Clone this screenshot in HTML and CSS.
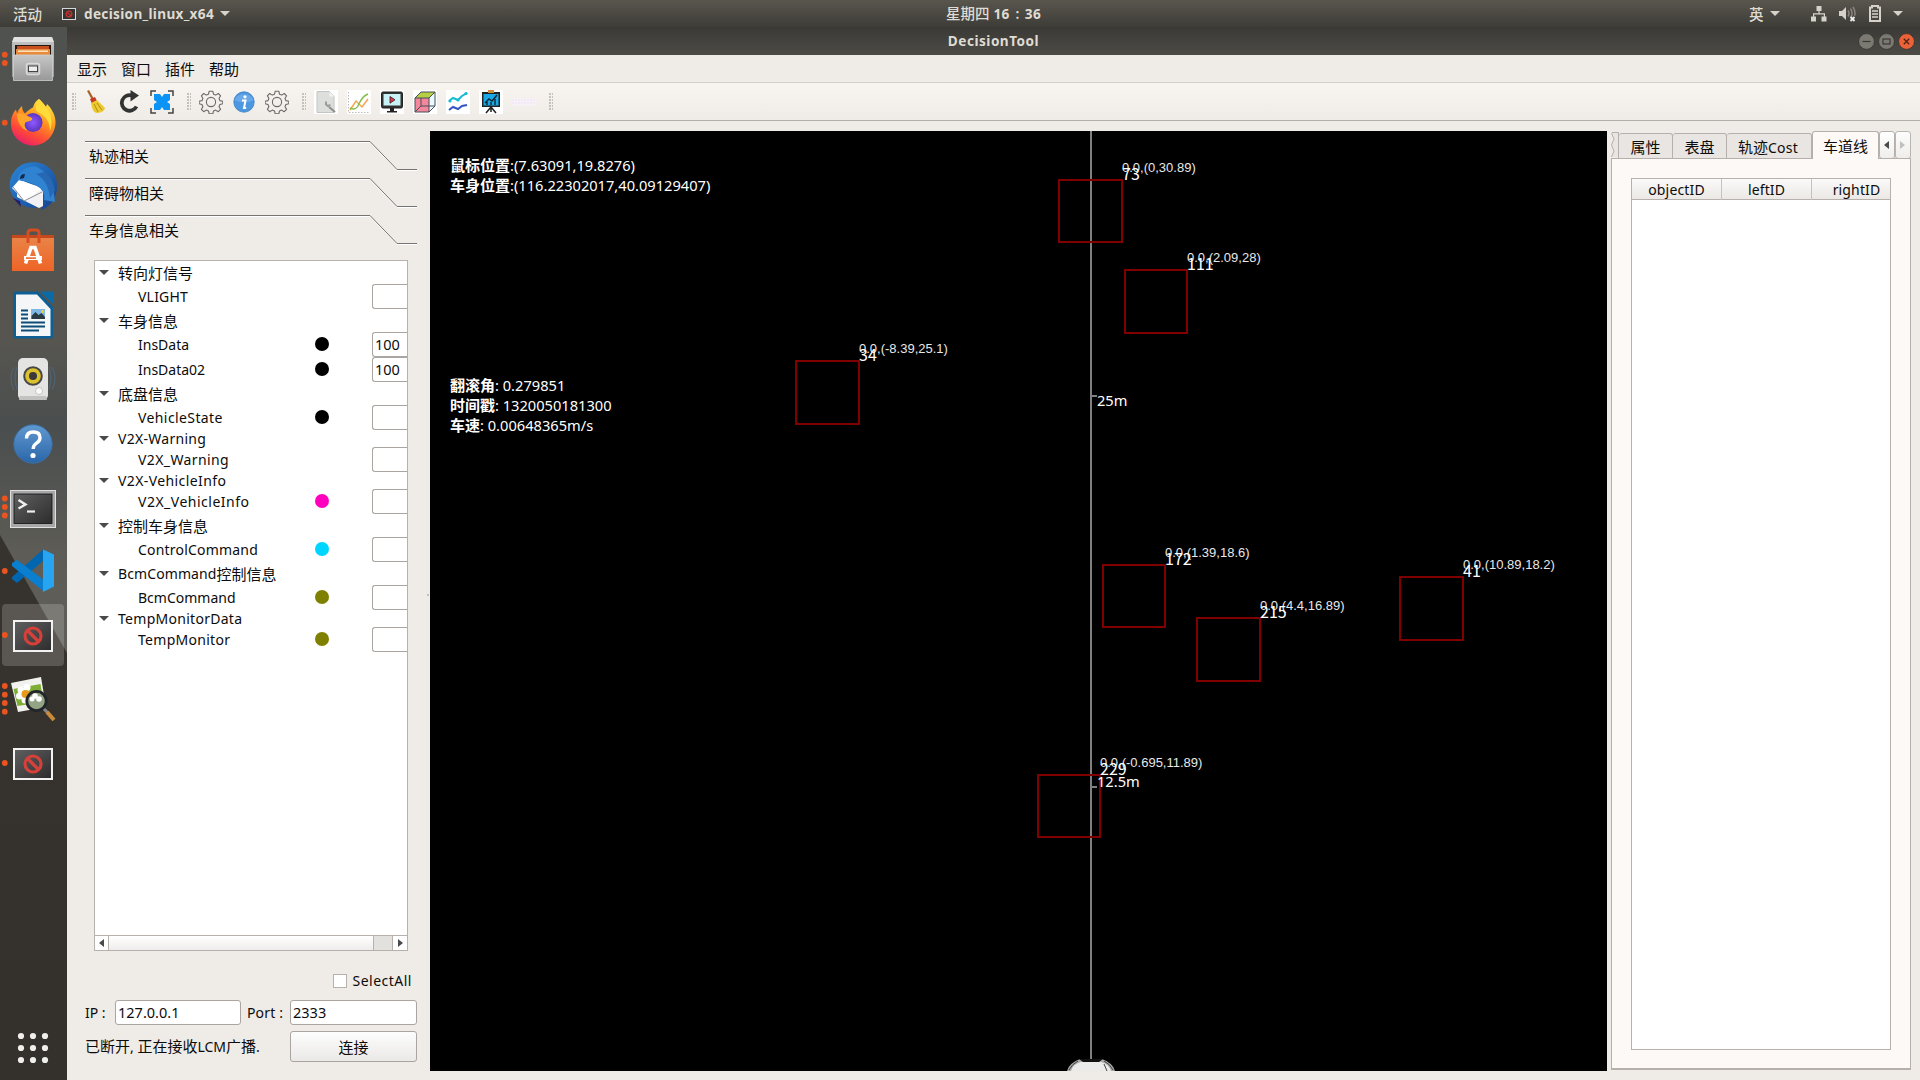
FILE: index.html
```html
<!DOCTYPE html>
<html lang="zh-CN">
<head>
<meta charset="utf-8">
<title>DecisionTool</title>
<link rel="stylesheet" href="styles.css">
</head>
<body>
<svg class="defs" width="0" height="0">
  <defs>
    <linearGradient id="gSilver" x1="0" y1="0" x2="0" y2="1"><stop offset="0" stop-color="#c6c6c6"/><stop offset="1" stop-color="#999"/></linearGradient>
    <linearGradient id="gFox" x1=".8" y1="0" x2=".3" y2="1"><stop offset="0" stop-color="#fff14a"/><stop offset=".4" stop-color="#ff9a1f"/><stop offset=".75" stop-color="#ff4838"/><stop offset="1" stop-color="#e81e6c"/></linearGradient>
    <radialGradient id="gGlobe"><stop offset="0" stop-color="#9059ff"/><stop offset="1" stop-color="#5b35c0"/></radialGradient>
    <linearGradient id="gBird" x1="0" y1="0" x2="1" y2="1"><stop offset="0" stop-color="#2b87d8"/><stop offset="1" stop-color="#14418e"/></linearGradient>
    <linearGradient id="gBag" x1="0" y1="0" x2="0" y2="1"><stop offset="0" stop-color="#e98347"/><stop offset="1" stop-color="#ef6427"/></linearGradient>
    <linearGradient id="gHelp" x1="0" y1="0" x2="0" y2="1"><stop offset="0" stop-color="#6198d0"/><stop offset="1" stop-color="#2a66a8"/></linearGradient>
    <linearGradient id="gDark" x1="0" y1="0" x2="1" y2="1"><stop offset="0" stop-color="#606060"/><stop offset="1" stop-color="#2c2c2c"/></linearGradient>
    <symbol id="noentry" viewBox="0 0 40 32">
      <rect x="1" y="1" width="38" height="30" fill="url(#gDark)" stroke="#f2f2f2" stroke-width="2"/>
      <circle cx="20" cy="16" r="8" fill="none" stroke="#d5403a" stroke-width="3.200"/>
      <path d="M14.500 10.500L25.500 21.500" stroke="#d5403a" stroke-width="3.400"/>
    </symbol>
    <symbol id="gear" viewBox="0 0 24 24">
      <path d="M10.200 1.200h3.600l.7 3 2.200.9 2.600-1.600 2.300 2.300-1.600 2.700.9 2.100 2.900.7v2.400l-2.900.8-.9 2.200 1.600 2.600-2.400 2.400-2.600-1.600-2.100.9-.7 2.900h-3.600l-.7-2.900-2.200-.9-2.600 1.600-2.300-2.400 1.500-2.600-.9-2.200-2.900-.8v-2.400l2.900-.7.9-2.100-1.500-2.700 2.300-2.300 2.600 1.600 2.200-.9z" fill="none" stroke="#6a6a6a" stroke-width="1.100" stroke-linejoin="round"/>
      <circle cx="12" cy="12" r="4.600" fill="none" stroke="#6a6a6a" stroke-width="1.100"/>
    </symbol>
  </defs>
</svg>

<header class="topbar">
  <div class="top-left">
    <span class="cn activities">活动</span>
    <svg class="app-ico" width="14" height="12" viewBox="0 0 14 12"><rect x=".5" y=".5" width="13" height="11" fill="#333" stroke="#d8d8d8"/><circle cx="7" cy="6" r="2.800" fill="none" stroke="#c8302c" stroke-width="1.300"/><path d="M5 4l4 4" stroke="#c8302c" stroke-width="1.200"/></svg>
    <span class="app-name">decision_linux_x64</span>
    <i class="caret"></i>
  </div>
  <div class="clock"><span class="cn">星期四</span> 16<span class="cn colon">:</span>36</div>
  <div class="top-right">
    <span class="cn ime">英</span><i class="caret"></i>
    <svg class="net" width="16" height="16" viewBox="0 0 16 16" fill="#d6d2c9"><path d="M5.500 0h5v5h-5zM0 10.500h5v5H0zM10.500 10.500h5v5h-5zM7.400 5h1.200v3H7.400zM2 7.300h12v1.200H2zM2 7.300h1.200v3.500H2zM12.800 7.300H14v3.500h-1.200z"/></svg>
    <svg class="vol" width="17" height="16" viewBox="0 0 17 16"><path d="M0 5h3l4-4v13l-4-4H0z" fill="#d6d2c9"/><path d="M9 4.500q2 3 0 6M11.500 2.500q3 5 0 9.500M14 .8q3 5 1.500 9" stroke="#88857e" stroke-width="1.500" fill="none"/><path d="M11.500 11l4 4m0-4l-4 4" stroke="#eee" stroke-width="1.800"/></svg>
    <svg class="bat" width="12" height="17" viewBox="0 0 12 17"><path d="M3 2.500V1h6v1.500h2V16H1V2.500z" fill="none" stroke="#d6d2c9" stroke-width="2"/><path d="M3 6h6M3 9h6M3 12h6" stroke="#d6d2c9" stroke-width="1.600"/></svg>
    <i class="caret"></i>
  </div>
</header>

<div class="desktop">
  <nav class="dock">
    <svg class="slot" viewBox="0 0 67 64"><g fill="#e95420"><circle cx="4.800" cy="27.700" r="2.900"/><circle cx="4.800" cy="36" r="2.900"/></g><path d="M14 10h38l2 6v34H12V16z" fill="url(#gSilver)"/><path d="M14 10h38l2 5H12z" fill="#e1e1e1"/><rect x="15" y="18" width="36" height="11" fill="#241a14"/><rect x="17" y="19" width="32" height="4" fill="#c8501e"/><rect x="16" y="22" width="34" height="7" fill="#e88a3c"/><rect x="18" y="23.500" width="30" height="1.400" fill="#ffe9c8"/><path d="M13.500 28h39v25.500h-39z" fill="url(#gSilver)" stroke="#cfcfcf" stroke-width=".8"/><rect x="26.500" y="36.500" width="13" height="11" rx="2" fill="#b5b5b5" stroke="#dadada" stroke-width="1.500"/><rect x="28.500" y="39" width="9" height="5.500" fill="#eee" stroke="#444"/></svg>
    <svg class="slot" viewBox="0 0 67 64"><circle cx="4.800" cy="31.700" r="2.900" fill="#e95420"/><path d="M39 8c3 3 5 5 7 8l1-3c5 5 9 12 8.500 19.500C54.500 45 45 54.500 33 54.500S11 45 11 32.500c0-6 2-11 5-14l1 4c1-3 3-6 5-7.500 0 3 1 6 3 7.500 5-5 8-6 8-6 1-4 3-7 6-8.500z" fill="url(#gFox)"/><circle cx="33" cy="31.500" r="9.500" fill="url(#gGlobe)"/><path d="M17 23c5-2 8 1 15 4 1 3-3 3-6 4-2 2-2 5 2 9-7-2-11-9-11-17z" fill="#ffa52a"/><path d="M39 8c3 3 5 5 7 8 6 7 7 16 4 24 0-10-5-15-12-19-4-2-2-9 1-13z" fill="#ffdc3a"/></svg>
    <svg class="slot" viewBox="0 0 67 64"><path d="M57 31c0 13-7 21-16 24l2-5-8 3c-8 0-15-3-20-9-6-7-7-16-3-24 4-7 9-11 15-12 12-3 30 3 30 23z" fill="url(#gBird)"/><path d="M17 34l6-8 20 9 0 16-4 2-22-11z" fill="#f2f2f4"/><path d="M12 33l7-8 24 8-18 13z" fill="#fff"/><path d="M13 32l11 14 18-9" fill="none" stroke="#8d8d96" stroke-width="1"/><path d="M17 25c2-10 11-15 20-13 8 4 14 11 16 19l2 16-11-2c2-8-4-13-11-16-5-2-10-4-16-4z" fill="#2f83d0"/><path d="M36 19q12 6 14 24l5-8q-2-13-11-18z" fill="#2668b4"/><path d="M20 24l4-1 1-4q-5 0-5 5z" fill="#142a50"/><path d="M13 43l8 9-1-6z" fill="#271c6b"/></svg>
    <svg class="slot" viewBox="0 0 67 64"><path d="M12 16h42v4H12z" fill="#c4481b"/><path d="M12 19h42v33H12z" fill="url(#gBag)"/><path d="M28 24V14q0-3 3-3h5q3 0 3 3v10" fill="none" stroke="#d44e1f" stroke-width="3"/><path d="M25.500 44.500L31 28.500h4l5.500 16" fill="none" stroke="#fff" stroke-width="3.600"/><path d="M24 37h18v4H24z" fill="#fff"/><path d="M26 38.300h10v1.600H26z" fill="#e8692c"/></svg>
    <svg class="slot" viewBox="0 0 67 64"><path d="M16 8.500h22L53 24v29q0 2.500-2.500 2.500h-35Q13 55.500 13 53V11q0-2.500 3-2.500z" fill="#0d5f94"/><path d="M40 8.500h13V21z" fill="#0c6aa6"/><path d="M16 11.500h21L50.500 26v27H16z" fill="#f4f6f8"/><path d="M21 27.500h7M21 31.500h7M21 35.500h7M21 39.500h24M21 43.500h24M21 47.500h18" stroke="#0b4c78" stroke-width="2"/><rect x="31" y="26" width="14" height="10" fill="#7fb8e4"/><path d="M31.500 36v-3l4-4 3 3 3-2 3.500 4v2z" fill="#2b3b44"/><circle cx="42.500" cy="28.500" r="1.500" fill="#f0d040"/></svg>
    <svg class="slot" viewBox="0 0 67 64"><path d="M14 20q-6 11 0 23M17 20q-4 11 0 22M52 20q6 11 0 23M49 20q4 11 0 22" stroke="#50687f" stroke-width="1.300" fill="none" opacity=".7"/><rect x="18" y="11" width="30" height="42" rx="5" fill="#e4e4e2"/><path d="M20 49h26l1 4H19z" fill="#c2c2c0"/><circle cx="33" cy="29" r="9.800" fill="#474747"/><circle cx="33" cy="29" r="7.800" fill="#d9c22c"/><circle cx="33" cy="29" r="4" fill="#3a3a3a"/><circle cx="39" cy="44" r="3.500" fill="#fafafa" stroke="#aaa" stroke-width=".6"/></svg>
    <svg class="slot" viewBox="0 0 67 64"><circle cx="33" cy="33" r="19.200" fill="url(#gHelp)" stroke="#3a70a8" stroke-width="1"/><path d="M26.500 27.500q0-6.500 6.800-6.500 6.700 0 6.700 5.700 0 3.300-3.800 5.700-3 2-3 5.600" fill="none" stroke="#fff" stroke-width="3.400"/><circle cx="33" cy="44.500" r="2.600" fill="#fff"/></svg>
    <svg class="slot" viewBox="0 0 67 64"><g fill="#e95420"><circle cx="4.800" cy="23.500" r="2.900"/><circle cx="4.800" cy="32" r="2.900"/><circle cx="4.800" cy="40.500" r="2.900"/></g><rect x="10.500" y="15.500" width="45" height="37" fill="#a7a7a7" stroke="#e0e0e0"/><rect x="14" y="19" width="38" height="29.500" fill="url(#gDark)" stroke="#111" stroke-width=".8"/><path d="M18.500 25l7 4.500-7 4" fill="none" stroke="#eee" stroke-width="2.400"/><path d="M27 36.500h8" stroke="#eee" stroke-width="2.200"/></svg>
    <svg class="slot" viewBox="0 0 67 64"><circle cx="4.800" cy="32" r="2.900" fill="#e95420"/><path d="M43 10.500V22L17 44l-5-4v-2z" fill="#0066b0"/><path d="M12 24l5-3 27 20v11.500L12 27z" fill="#0a7fd0"/><path d="M43 10.500L54 15.500v32L43 53z" fill="#27a5f0"/></svg>
    <svg class="slot" viewBox="0 0 67 64"><rect x="2" y="1" width="62" height="62" rx="4" fill="#fff" fill-opacity=".18"/><circle cx="4.800" cy="32" r="2.900" fill="#e95420"/><use href="#noentry" x="13" y="17" width="40" height="32"/></svg>
    <svg class="slot" viewBox="0 0 67 64"><g fill="#e95420"><circle cx="4.800" cy="19" r="2.900"/><circle cx="4.800" cy="27.700" r="2.900"/><circle cx="4.800" cy="36" r="2.900"/><circle cx="4.800" cy="44.700" r="2.900"/></g><path d="M11 16l30-6 5 30-28 5z" fill="#f1f1ee"/><path d="M13.500 22l27-5 3 18-26 4z" fill="#7fae35"/><g fill="#fff"><circle cx="21" cy="23" r="3.500"/><circle cx="27" cy="20.500" r="3.500"/><circle cx="19.500" cy="29" r="3.500"/><circle cx="25" cy="33" r="3.500"/></g><circle cx="25.500" cy="27" r="4" fill="#e79a1c"/><circle cx="36.500" cy="34" r="9.700" fill="#93a585" stroke="#22262a" stroke-width="2.800"/><g fill="#fff"><circle cx="35" cy="29" r="2.800"/><circle cx="39" cy="32" r="2.800"/><circle cx="32" cy="32" r="2.500"/></g><path d="M44 42l4 4" stroke="#888" stroke-width="3"/><path d="M47 45l7 8" stroke="#c98a3a" stroke-width="4"/></svg>
    <svg class="slot" viewBox="0 0 67 64"><circle cx="4.800" cy="32" r="2.900" fill="#e95420"/><use href="#noentry" x="13" y="17" width="40" height="32"/></svg>
    <svg class="slot apps" viewBox="0 0 67 64"><g fill="#f0efec"><circle cx="21" cy="20" r="3.100"/><circle cx="33" cy="20" r="3.100"/><circle cx="45" cy="20" r="3.100"/><circle cx="21" cy="32" r="3.100"/><circle cx="33" cy="32" r="3.100"/><circle cx="45" cy="32" r="3.100"/><circle cx="21" cy="44" r="3.100"/><circle cx="33" cy="44" r="3.100"/><circle cx="45" cy="44" r="3.100"/></g></svg>
  </nav>

  <main class="window">
    <div class="titlebar">
      <span class="title">DecisionTool</span>
      <div class="wm">
        <svg width="17" height="17" viewBox="0 0 17 17"><circle cx="8.500" cy="8.500" r="7.900" fill="#7b7972" stroke="#34332f" stroke-width=".8"/><path d="M4.500 8.500h8" stroke="#3a3935" stroke-width="1.200"/></svg>
        <svg width="17" height="17" viewBox="0 0 17 17"><circle cx="8.500" cy="8.500" r="7.900" fill="#7b7972" stroke="#34332f" stroke-width=".8"/><rect x="5" y="6" width="7" height="5" fill="none" stroke="#3a3935" stroke-width="1.200"/></svg>
        <svg width="17" height="17" viewBox="0 0 17 17"><circle cx="8.500" cy="8.500" r="7.900" fill="#ec6238" stroke="#34332f" stroke-width=".8"/><path d="M5.800 5.800l5.400 5.400m0-5.400l-5.400 5.400" stroke="#4a2418" stroke-width="1.300"/></svg>
      </div>
    </div>

    <div class="menubar cn"><span>显示</span><span>窗口</span><span>插件</span><span>帮助</span></div>

    <div class="toolbar">
      <i class="grip"></i>
      <div class="tools">
        <svg viewBox="0 0 24 24"><path d="M3 1l2-1 5 9-2 1z" fill="#a5642a"/><path d="M6 9l5-2 2 4-5 3z" fill="#c23a22"/><path d="M7 13l6-3 8 8q-1 5-9 5-4-2-5-10z" fill="#ecc931"/><path d="M10 14l4 8M13 13l5 7" stroke="#b28d12" stroke-width="1"/></svg>
        <svg viewBox="0 0 24 24"><path d="M19.500 16.500A7.800 7.800 0 1 1 15 5.500" fill="none" stroke="#333" stroke-width="3.800"/><path d="M13.500 0l8.500 5.500-8.500 6z" fill="#333"/></svg>
        <svg viewBox="0 0 24 24"><path d="M1 6V1h5M18 1h5v5M23 18v5h-5M6 23H1v-5" fill="none" stroke="#444" stroke-width="1.500"/><path d="M4 4h6l2 3 2-3h6v6l-3 2 3 2v6h-6l-2-3-2 3H4v-6l3-2-3-2z" fill="#0b93f5"/></svg>
      </div>
      <i class="grip"></i>
      <div class="tools">
        <svg viewBox="0 0 24 24"><use href="#gear"/></svg>
        <svg viewBox="0 0 24 24"><circle cx="12" cy="12" r="10.200" fill="#4c97e0" stroke="#3a7fc6" stroke-width=".8"/><path d="M2.500 10a10 8.500 0 0 1 19 0q-9 5-19 0z" fill="#7db6ee" opacity=".6"/><circle cx="13" cy="6.800" r="1.600" fill="#fff"/><path d="M10 10.500h3.500L12 18h2.200" fill="none" stroke="#fff" stroke-width="2"/></svg>
        <svg viewBox="0 0 24 24"><use href="#gear"/></svg>
      </div>
      <i class="grip"></i>
      <div class="tools boxed">
        <svg viewBox="0 0 24 24"><path d="M3 1.500h12.500l4.500 5v16H3z" fill="#dddfdc" stroke="#c2c5c1"/><path d="M15.500 1.500v5H20z" fill="#f3f3f3"/><path d="M15 17l6 5" stroke="#8d908c" stroke-width="2.200"/><path d="M12 11.500v3l2 1.500 2.500-1" fill="none" stroke="#9a9d99" stroke-width="2"/></svg>
        <svg viewBox="0 0 24 24"><path d="M1.500 2v20.500H23" fill="none" stroke="#bbb" stroke-width="1" stroke-dasharray="1.500 1.500"/><path d="M3 20l6-9 6 6 6-8" fill="none" stroke="#f3a24c" stroke-width="1.400"/><path d="M3 18c4 2 7 1 9-4s4-8 9-10" fill="none" stroke="#84be4c" stroke-width="1.400"/></svg>
        <svg viewBox="0 0 24 24"><rect x="1.500" y="2" width="21" height="16" rx="1.500" fill="#333" stroke="#222"/><rect x="3.500" y="4" width="17" height="11.500" fill="#c9f2f6"/><path d="M10 6.500l5 3.300-5 3.400z" fill="#e8334a" stroke="#222" stroke-width=".8"/><path d="M10 18h4v3h-4zM7 21h10v1.500H7z" fill="#222"/></svg>
        <svg viewBox="0 0 24 24"><path d="M2 8l6-6h14v14l-6 6H2z" fill="#e9fbff"/><path d="M2 8l6-6h14l-6 6z" fill="#b6cf45"/><path d="M2 8h14v14H2z" fill="#f5879d"/><path d="M2 8l6-6h14v14l-6 6H2zM2 8h14v14M16 8l6-6M8 8v8L2 22M8 16h14" fill="none" stroke="#454f55" stroke-width="1"/></svg>
        <svg viewBox="0 0 24 24"><path d="M3 11l4-3 5 2 4-4 5-3" fill="none" stroke="#15bcd6" stroke-width="2"/><path d="M3 20l4-3 5 2 4-3 5-1" fill="none" stroke="#3555c4" stroke-width="2"/><g fill="#15bcd6"><circle cx="4" cy="11" r="1.600"/><circle cx="12" cy="10" r="1.600"/><circle cx="20" cy="3.500" r="1.600"/></g></svg>
        <svg viewBox="0 0 24 24"><path d="M12 17l-5 6M12 17l5 6M12 15v7" stroke="#222" stroke-width="1.500"/><path d="M3 2h18v15H3z" fill="#222"/><path d="M4.500 4h15v11.500h-15z" fill="#19a9e6"/><rect x="9" y="0" width="6" height="3" fill="#c98b3c"/><path d="M6 13l4-4 3 2 5-6M8 15v-3M12 15v-3M16 15V9" fill="none" stroke="#123" stroke-width="1.400"/></svg>
        <svg class="strip" viewBox="0 0 24 24"><path d="M0 8.500h24v7H0z" fill="#f8f2f8"/><path d="M0 10h24M0 13h24" stroke="#ebe1f2" stroke-dasharray="2 1"/></svg>
      </div>
      <i class="grip"></i>
    </div>

    <div class="content">
      <aside class="left">
        <div class="fold cn"><svg viewBox="0 0 332 29"><path d="M0 1.500H285L312 29.500H332" fill="none" stroke="#fff"/><path d="M0 .5H285L312 28.500H332" fill="none" stroke="#77746f"/></svg><span>轨迹相关</span></div>
        <div class="fold cn"><svg viewBox="0 0 332 29"><path d="M0 1.500H285L312 29.500H332" fill="none" stroke="#fff"/><path d="M0 .5H285L312 28.500H332" fill="none" stroke="#77746f"/></svg><span>障碍物相关</span></div>
        <div class="fold cn"><svg viewBox="0 0 332 29"><path d="M0 1.500H285L312 29.500H332" fill="none" stroke="#fff"/><path d="M0 .5H285L312 28.500H332" fill="none" stroke="#77746f"/></svg><span>车身信息相关</span></div>

        <div class="tree">
          <div class="rows">
            <div class="group cn">转向灯信号</div>
            <div class="item ls2"><span>VLIGHT</span><b class="val"></b></div>
            <div class="group cn">车身信息</div>
            <div class="item"><span>InsData</span><i class="dot black"></i><b class="val">100</b></div>
            <div class="item"><span>InsData02</span><i class="dot black"></i><b class="val">100</b></div>
            <div class="group cn">底盘信息</div>
            <div class="item ls4"><span>VehicleState</span><i class="dot black"></i><b class="val"></b></div>
            <div class="group short ls3">V2X-Warning</div>
            <div class="item ls4"><span>V2X_Warning</span><b class="val"></b></div>
            <div class="group short ls4">V2X-VehicleInfo</div>
            <div class="item ls5"><span>V2X_VehicleInfo</span><i class="dot magenta"></i><b class="val"></b></div>
            <div class="group cn">控制车身信息</div>
            <div class="item ls2"><span>ControlCommand</span><i class="dot cyan"></i><b class="val"></b></div>
            <div class="group ls1">BcmCommand<span class="cn">控制信息</span></div>
            <div class="item"><span>BcmCommand</span><i class="dot olive"></i><b class="val"></b></div>
            <div class="group short ls3">TempMonitorData</div>
            <div class="item ls3"><span>TempMonitor</span><i class="dot olive"></i><b class="val"></b></div>
          </div>
          <div class="hscroll"><i class="btn"><i class="tri l"></i></i><i class="thumb"></i><i class="trough"></i><i class="btn"><i class="tri r"></i></i></div>
        </div>

        <div class="selectall"><i class="check"></i><span class="ls5">SelectAll</span></div>
        <div class="form">
          <span class="lbl">IP :</span><div class="field">127.0.0.1</div>
          <span class="lbl port">Port :</span><div class="field">2333</div>
        </div>
        <div class="connect">
          <div class="status"><span class="cn">已断开</span>, <span class="cn">正在接收</span>LCM<span class="cn">广播</span>.</div>
          <div class="button cn">连接</div>
        </div>
      </aside>

      <svg class="canvas" width="1177" height="940" viewBox="430 131 1177 940">
        <rect x="430" y="131" width="1177" height="940" fill="#000"/>
        <rect x="1090" y="131" width="2" height="928" fill="#808080"/>
        <path d="M1092 396h5M1092 787h5" stroke="#808080" stroke-width="2"/>
        <g fill="none" stroke="#800000" stroke-width="2">
          <rect x="1059" y="180" width="63" height="62"/>
          <rect x="1125" y="270" width="62" height="63"/>
          <rect x="796" y="361" width="63" height="63"/>
          <rect x="1103" y="565" width="62" height="62"/>
          <rect x="1197" y="618" width="63" height="63"/>
          <rect x="1400" y="577" width="63" height="63"/>
          <rect x="1038" y="775" width="62" height="62"/>
        </g>
        <g class="pos">
          <text x="1122" y="172">0.0,(0,30.89)</text>
          <text x="1187" y="262">0.0,(2.09,28)</text>
          <text x="859" y="353">0.0,(-8.39,25.1)</text>
          <text x="1165" y="557">0.0,(1.39,18.6)</text>
          <text x="1260" y="610">0.0,(4.4,16.89)</text>
          <text x="1463" y="569">0.0,(10.89,18.2)</text>
          <text x="1100" y="767">0.0,(-0.695,11.89)</text>
        </g>
        <g class="id">
          <text x="1122" y="180">73</text>
          <text x="1187" y="270">111</text>
          <text x="859" y="361">34</text>
          <text x="1165" y="565">172</text>
          <text x="1260" y="618">215</text>
          <text x="1463" y="577">41</text>
          <text x="1100" y="775">229</text>
        </g>
        <g class="info">
          <text x="1097" y="406">25m</text>
          <text x="1097" y="787">12.5m</text>
          <text x="450" y="171"><tspan class="han">鼠标位置</tspan>:(7.63091,19.8276)</text>
          <text x="450" y="191"><tspan class="han">车身位置</tspan>:(116.22302017,40.09129407)</text>
          <text x="450" y="391"><tspan class="han">翻滚角</tspan>: 0.279851</text>
          <text x="450" y="411"><tspan class="han">时间戳</tspan>: 1320050181300</text>
          <text x="450" y="431"><tspan class="han">车速</tspan>: 0.00648365m/s</text>
        </g>
        <path d="M1067 1071q2-8 13-12h22q11 4 13 12z" fill="#a9a9a9"/>
        <path d="M1079 1059h24l-4 3h-16z" fill="#111"/>
        <path d="M1071 1071q2-7 10-9h20q8 2 10 9z" fill="#ebebeb"/>
        <path d="M1069 1070q3-6 9-9M1113 1070q-3-6-9-9M1104 1064l3 7" stroke="#444" stroke-width="1" fill="none"/>
      </svg>

      <aside class="right">
        <div class="tabs">
          <svg class="torn" width="8" height="26" viewBox="0 0 8 26"><path d="M.5.500H8V25H.500l2.500-5-2.500-6 2.500-6z" fill="#e9e5e2"/><path d="M.5 1l2.500 6-2.500 6 2.500 6-2.500 6M1 .5h7M7.500 0v26" fill="none" stroke="#b5b0ac"/></svg>
          <div class="tab cn t1">属性</div>
          <div class="tab cn t1">表盘</div>
          <div class="tab t2"><span class="cn">轨迹</span>Cost</div>
          <div class="tab cn active">车道线</div>
          <div class="nav"><i class="tri l"></i></div>
          <div class="nav off"><i class="tri r"></i></div>
        </div>
        <div class="pane">
          <div class="table"><div class="thead"><span>objectID</span><span>leftID</span><span>rightID</span></div></div>
        </div>
      </aside>
    </div>
  </main>
</div>
</body>
</html>
```
FILE: styles.css
```css
* { box-sizing: border-box; }
body {
  margin: 0; width: 1920px; height: 1080px; overflow: hidden;
  display: flex; flex-direction: column;
  background: #efebe7; color: #0c0c0c;
  font: 14px/20px "Noto Sans", "Noto Sans CJK SC", sans-serif;
}
i { font-style: normal; display: block; }
svg { display: block; }
.defs { position: absolute; }
.cn { font-family: "Noto Sans CJK SC", sans-serif; font-size: 15px; letter-spacing: 0; }

/* letter spacing steps for Latin labels */
.ls1 { letter-spacing: .1px; }
.ls2 { letter-spacing: .2px; }
.ls3 { letter-spacing: .28px; }
.ls4 { letter-spacing: .4px; }
.ls5 { letter-spacing: .5px; }

/* desktop top bar */
.topbar {
  flex: none; height: 27px; display: grid; grid-template-columns: 946px 1fr 171px; align-items: center;
  background: linear-gradient(#59564e, #3d3c37); color: #dfdbd2; font-weight: 700;
}
.top-left, .top-right { display: flex; align-items: center; }
.top-left { padding-left: 13px; }
.topbar .cn { font-weight: 500; font-size: 14.5px; }
.app-ico { margin: 0 8px 0 20px; }
.app-name { font-size: 13.6px; letter-spacing: .32px; margin-right: 5px; width: 131px; white-space: nowrap; }
.caret { border: 5px solid transparent; border-top-color: #d6d2c9; border-bottom: 0; }
.clock { font-size: 13.6px; letter-spacing: .4px; white-space: nowrap; }
.clock .cn { letter-spacing: 0; }
.clock .colon { display: inline-block; width: 15px; text-align: center; }
.ime { margin-right: 6px; }
.net { margin-left: 31px; }
.vol { margin-left: 12px; }
.bat { margin: 0 12px 0 13px; }

.desktop { flex: 1; display: flex; min-height: 0; }

/* launcher */
.dock {
  width: 67px; display: flex; flex-direction: column;
  background:
    linear-gradient(to bottom left, transparent 49.500%, #36322d 50.500%) 0 508px / 67px 118px no-repeat,
    linear-gradient(#36322d, #34312c) 0 626px / 67px 427px no-repeat,
    linear-gradient(#50524f, #565550 30%, #4a4e4e 38%, #5d5c56 50%, #6a6963);
}
.slot { width: 67px; height: 64px; flex: none; }
.apps { margin-top: auto; }

/* window frame */
.window { flex: 1; display: flex; flex-direction: column; min-width: 0; }
.titlebar {
  flex: none; height: 28px; display: grid; grid-template-columns: 1fr auto 1fr; align-items: center;
  background: linear-gradient(#3a3935, #4c4b46); color: #dfdbd2; font-weight: 700; font-size: 13.600px; letter-spacing: .5px;
}
.title { grid-column: 2; }
.wm { display: flex; gap: 3px; justify-content: flex-end; padding-right: 5px; }
.menubar { flex: none; height: 27px; padding: 3px 0 0 10px; display: flex; gap: 14px; }
.menubar span { line-height: 22px; }
.toolbar {
  flex: none; height: 39px; display: flex; align-items: center; padding-left: 5px;
  border-top: 1px solid #d3cfcb; border-bottom: 1px solid #b3aeaa;
  background: linear-gradient(#f8f5f1, #efebe7);
}
.grip {
  width: 4px; height: 17px;
  background: radial-gradient(circle at 1px 1px, #c3bfbb 0 .7px, transparent .9px) 0 0 / 3px 3px;
}
.tools { display: flex; gap: 9px; margin: 0 13px 0 8px; }
.tools svg { width: 24px; height: 24px; }
.boxed svg { background: #fff; }
.boxed .strip { background: none; }

.content { flex: 1; display: flex; min-height: 0; padding-top: 10px; }

/* left panel; the dotted strip on its right edge is the splitter handle */
.left {
  width: 363px; padding: 10px 13px 0 18px; display: flex; flex-direction: column;
  background: radial-gradient(circle at 1px 1px, #c3bfbb 0 .7px, transparent .9px) 360px 463px / 3px 3px no-repeat;
}
.fold { height: 37px; flex: none; display: grid; }
.fold svg { grid-area: 1 / 1; width: 332px; height: 29px; overflow: visible; }
.fold span { grid-area: 1 / 1; padding: 4px 0 0 4px; line-height: 22px; }
.tree {
  flex: none; width: 314px; height: 691px; margin: 8px 0 0 9px; border: 1px solid #b6b1ad; background: #fff;
  display: flex; flex-direction: column; overflow: hidden;
}
.rows { flex: 1; }
.group { height: 23px; line-height: 26px; display: flex; align-items: center; padding-left: 4px; white-space: nowrap; }
.group::before { content: ""; border: 5px solid transparent; border-top-color: #4a4a4a; border-bottom: 0; margin-right: 9px; }
.short { height: 17px; }
.item { height: 25px; display: grid; grid-template-columns: 177px 100px 35px; align-items: center; }
.item span { padding-left: 43px; white-space: nowrap; }
.dot { width: 14px; height: 14px; border-radius: 50%; grid-column: 2; margin: -2px 0 0 43px; }
.black { background: #000; }
.magenta { background: #ff00bf; }
.cyan { background: #00d5ff; }
.olive { background: #808000; }
.val {
  grid-column: 3; grid-row: 1; height: 25px; border: 1px solid #aaa5a1; border-right: 0; border-radius: 3px 0 0 3px;
  font-weight: 400; padding-left: 2px; line-height: 23px; font-size: 14.500px;
}
.hscroll { height: 15px; display: flex; border-top: 1px solid #b6b1ad; }
.btn { width: 14px; display: flex; align-items: center; justify-content: center; }
.btn:first-child { width: 13px; }
.thumb { flex: 1; border: solid #b6b1ad; border-width: 0 1px; background: linear-gradient(#fff, #efedeb); }
.trough { width: 19px; background: #e3e1de; border-right: 1px solid #b6b1ad; }
.tri { border: 4.500px solid transparent; }
.tri.l { border-right-color: #4a4a4a; border-left: 0; border-right-width: 5px; }
.tri.r { border-left-color: #4a4a4a; border-right: 0; border-left-width: 5px; }
.selectall { margin-top: 20px; height: 20px; display: flex; align-items: center; justify-content: flex-end; gap: 5px; padding-right: 5px; }
.check { width: 14px; height: 14px; border: 1px solid #b6b1ad; background: #fff; }
.form { margin-top: 9px; height: 25px; display: grid; grid-template-columns: 30px 126px 49px 127px; align-items: center; }
.port { padding-left: 6px; letter-spacing: .15px; }
.lbl { white-space: nowrap; }
.field { height: 25px; border: 1px solid #aaa5a1; border-radius: 3px; background: #fff; padding-left: 2px; line-height: 23px; font-size: 14.500px; }
.connect { margin-top: 6px; height: 31px; display: grid; grid-template-columns: 205px 127px; align-items: center; }
.status { white-space: nowrap; }
.button { height: 31px; border: 1px solid #aaa5a1; border-radius: 3px; background: linear-gradient(#fdfdfd, #ebe9e7); text-align: center; line-height: 30px; }

/* scene */
.canvas { flex: none; }
.pos { font: 13px "Liberation Sans", sans-serif; fill: #e8e8e8; }
.id { font: 16px "Noto Sans CJK SC", sans-serif; fill: #fff; }
.info { font: 14.650px "Noto Sans", sans-serif; fill: #fff; white-space: pre; }
.han { font: 700 15px "Noto Sans CJK SC", sans-serif; }

/* right panel */
.right { width: 300px; height: 939px; margin-left: 4px; display: flex; flex-direction: column; }
.tabs { flex: none; height: 28px; display: flex; align-items: flex-end; }
.torn { margin-bottom: 1px; }
.tab { height: 26px; border: 1px solid #b5b0ac; border-left: 0; background: #e9e5e2; text-align: center; line-height: 25px; white-space: nowrap; border-radius: 3px 3px 0 0; }
.t1 { width: 54px; }
.t2 { width: 85px; padding-right: 2px; letter-spacing: .2px; }
.tab.active { width: 67px; height: 28px; border-left: 1px solid #b5b0ac; border-bottom: 0; background: #fcf9f6; line-height: 28px; position: relative; }
.nav { width: 16px; height: 28px; border: 1px solid #b5b0ac; border-radius: 3px; background: linear-gradient(#fff, #f0eeec); display: flex; align-items: center; justify-content: center; }
.off { opacity: .9; }
.off .tri.r { border-left-color: #bbb; }
.nav .tri.l, .nav .tri.r { margin-left: -1px; }
.pane { flex: 1; margin-top: -1px; border: 1px solid #b5b0ac; border-bottom-width: 2px; background: #fcf9f6; padding: 19px 19px 18px; display: flex; }
.table { flex: 1; border: 1px solid #b6b1ad; background: #fff; overflow: hidden; }
.thead { height: 21px; width: 270px; display: grid; grid-template-columns: repeat(3, 90px); background: linear-gradient(#fbfaf8, #ebe8e5); border-bottom: 1px solid #b6b1ad; }
.thead span { text-align: center; border-right: 1px solid #c6c2be; line-height: 21px; letter-spacing: .15px; }
```
